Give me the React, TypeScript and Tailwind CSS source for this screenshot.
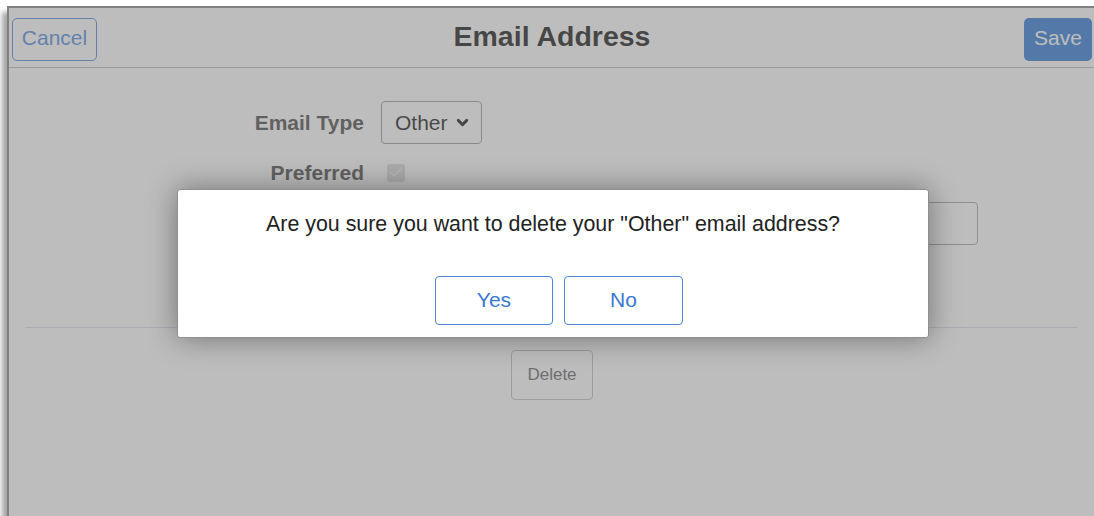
import { Check, ChevronDown } from 'lucide-react';

function FieldLabel({ children }: { children?: React.ReactNode }) {
  return (
    <div className="flex items-center justify-end text-[21px] font-bold text-[#444]">{children}</div>
  );
}

export default function App() {
  return (
    <div className="h-[516px] w-[1094px] overflow-hidden bg-white pl-[7px] pt-[6px] font-['Liberation_Sans',Arial,sans-serif]">
      <div className="relative h-[520px] w-[1088px] border-l-2 border-t-2 border-[#808080] bg-white shadow-[-5px_6px_5px_rgba(0,0,0,0.35)]">
        {/* Header */}
        <div className="grid h-[60px] grid-cols-[1fr_auto_1fr] items-center border-b border-[#b9b9b9] px-[3px] pt-[4px]">
          <div>
            <button className="h-[43px] w-[85px] rounded-[5px] border border-[#4d87d8] pb-[3px] text-[21px] text-[#4d87d8]">
              Cancel
            </button>
          </div>
          <h1 className="mb-[6px] text-[28.5px] font-bold text-[#111]">Email Address</h1>
          <div className="flex justify-end">
            <button className="h-[43px] w-[68px] rounded-[5px] bg-[#2977d5] pb-[3px] text-[21px] text-white">
              Save
            </button>
          </div>
        </div>

        {/* Form */}
        <div className="mt-[33px] grid grid-cols-[355px_auto] gap-x-[17px] gap-y-[8px]">
          <FieldLabel>Email Type</FieldLabel>
          <div className="flex h-[43px] w-[101px] items-center justify-between rounded-[4px] border border-[#999] pl-[13px] pr-[10px] text-[21px] text-[#111]">
            <span>Other</span>
            <ChevronDown size={17} strokeWidth={4} />
          </div>

          <FieldLabel>Preferred</FieldLabel>
          <div className="flex h-[42px] items-center pl-[6px]">
            <div className="flex h-[18px] w-[18px] items-center justify-center rounded-[3px] bg-[#dadada]">
              <Check size={14} strokeWidth={3} className="text-[#f2f2f2]" />
            </div>
          </div>

          {/* address row sits under the dialog */}
          <FieldLabel />
          <div className="h-[43px] w-[597px] rounded-[4px] border border-[#a1a1a1]" />
        </div>

        <div className="ml-[16px] mr-[18px] mt-[82px] border-t border-[#d7dfe9]" />

        <div className="mt-[22px] flex justify-center">
          <button className="h-[50px] w-[82px] rounded-[4px] border border-[#bdbdbd] text-[17px] text-[#616161]">
            Delete
          </button>
        </div>

        {/* Modal backdrop */}
        <div className="absolute inset-0 bg-[#7b7b7b]/50" />

        {/* Confirm dialog */}
        <div className="absolute left-[168px] top-[181px] flex h-[149px] w-[752px] flex-col items-center rounded-[3px] border border-[#8f8f8f] bg-white pt-[18px] shadow-[0_0_30px_rgba(0,0,0,0.4)]">
          <p className="text-[21.4px] text-[#222]">Are you sure you want to delete your "Other" email address?</p>
          <div className="mt-[36px] flex gap-[11px] pl-[12px]">
            <button className="h-[49px] w-[118px] rounded-[4px] border border-[#4a86d6] pb-[2px] text-[21px] text-[#3a78d0]">
              Yes
            </button>
            <button className="h-[49px] w-[119px] rounded-[4px] border border-[#4a86d6] pb-[2px] text-[21px] text-[#3a78d0]">
              No
            </button>
          </div>
        </div>
      </div>
    </div>
  );
}
